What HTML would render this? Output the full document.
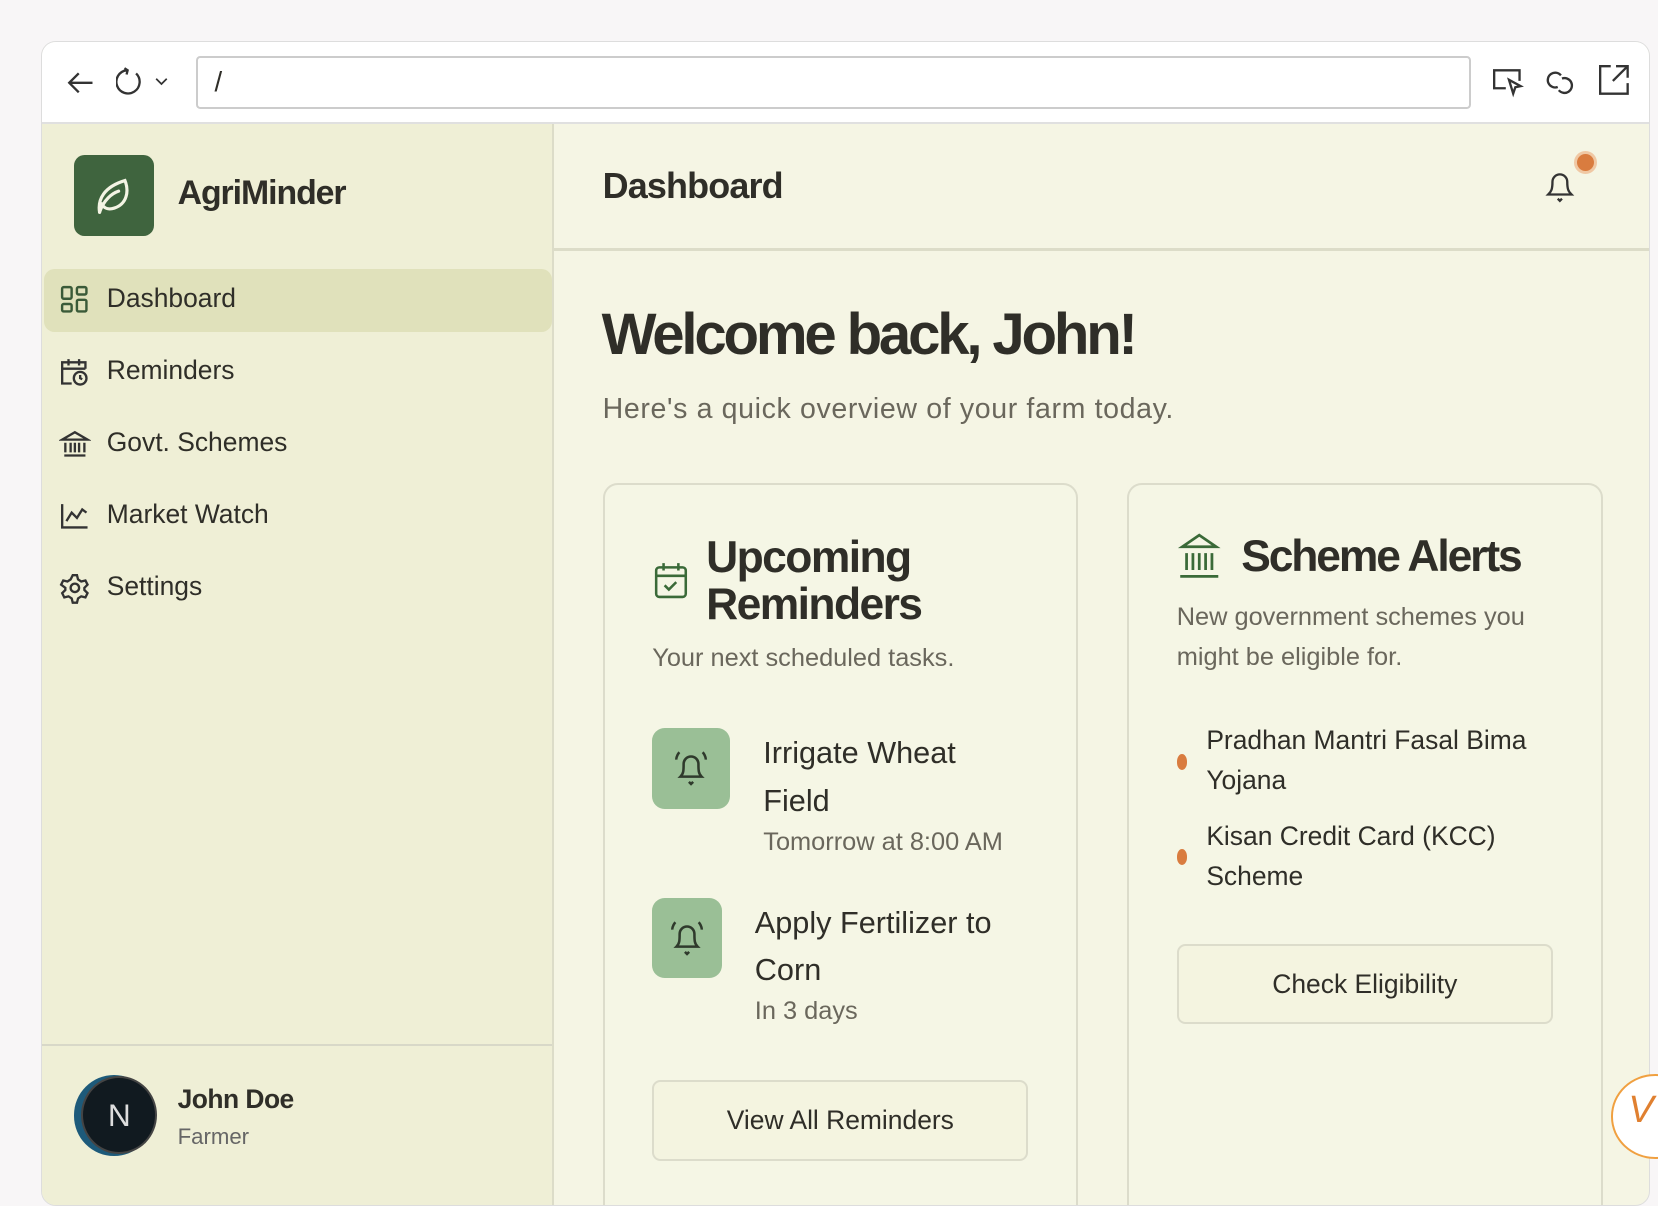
<!DOCTYPE html>
<html><head><meta charset="utf-8"><style>
html{zoom:1.0574}
body{margin:0;width:1568px;height:1120px;background:#f8f6f7;font-family:"Liberation Sans Narrow","Liberation Sans",sans-serif;font-stretch:condensed;color:#2f2e28;position:relative;overflow:hidden}
.a{position:absolute;white-space:nowrap}
.frame{position:absolute;left:39px;top:39px;width:1520px;height:1100px;border:1px solid #ddd;border-radius:14px;background:#f5f5e4;overflow:hidden}
.tb{position:absolute;left:0;top:0;width:1520px;height:75px;background:#fff;border-bottom:2px solid #e0e0e0}
.side{position:absolute;left:0;top:77px;width:482px;height:1030px;background:#efefd6;border-right:2px solid #dcdcc8}
.card{position:absolute;background:#f5f6e5;border:2px solid #dcdccb;border-radius:14px}
.btn{position:absolute;border:2px solid #dcdccb;border-radius:8px;background:#f4f4e0;text-align:center;font-size:25px}
.bell{position:absolute;width:74px;height:76px;background:#9abf96;border-radius:12px}
svg{position:absolute}
</style></head><body>
<div class="frame">
 <div class="tb">
  <svg style="left:22px;top:24px" width="30" height="28" viewBox="0 0 30 28" fill="none" stroke="#333" stroke-width="2.2"><path d="M26 14H4M13 5L4 14l9 9"/></svg>
  <svg style="left:70px;top:22px" width="50" height="32" viewBox="0 0 50 32" fill="none" stroke="#333" stroke-width="2.2"><path d="M10 5A11 11 0 1 0 19 8M8 3l3 2-1 4"/><path d="M38 13l5 5 5-5" stroke-width="1.6"/></svg>
  <div style="position:absolute;left:145px;top:13px;width:1186px;height:46px;border:2px solid #ccc;border-radius:4px;font-size:26px;line-height:46px;padding-left:16px;font-family:'Liberation Sans',sans-serif">/</div>
  <svg style="left:1370px;top:22px" width="32" height="32" viewBox="0 0 32 32" fill="none" stroke="#333" stroke-width="2.2"><path d="M14 22H3V5h24v10"/><path d="M17 14l11 6-5 1-2 6z"/></svg>
  <svg style="left:1420px;top:24px" width="32" height="28" viewBox="0 0 32 28" fill="none" stroke="#333" stroke-width="2.2"><path d="M13 18a7 7 0 1 1 3-11M17 10a7 7 0 1 1-3 11"/></svg>
  <svg style="left:1470px;top:20px" width="32" height="32" viewBox="0 0 32 32" fill="none" stroke="#333" stroke-width="2.2"><path d="M13 3H3v26h26V19M18 3h11v11M29 3L15 17"/></svg>
 </div>
 <div class="side">
  <div style="position:absolute;left:30px;top:30px;width:76px;height:76px;background:#3f643e;border-radius:10px"></div>
  <svg style="left:44px;top:44px" width="48" height="48" viewBox="0 0 48 48" fill="none" stroke="#f4f4e4" stroke-width="3" stroke-linecap="round"><path d="M10 40C8 28 14 16 34 10c4 10 2 22-10 26-6 2-10 0-12-4"/><path d="M10 40c4-12 12-18 18-20"/></svg>
  <div class="a" style="left:128px;top:48px;font-size:32px;font-weight:bold;letter-spacing:-1px">AgriMinder</div>
  <div style="position:absolute;left:2px;top:137px;width:480px;height:60px;background:#e0e1bb;border-radius:10px"></div>
  <svg style="left:17px;top:153px" width="28" height="28" viewBox="0 0 28 28" fill="none" stroke="#3a5a38" stroke-width="2.3"><rect x="2" y="2" width="9" height="11" rx="1.5"/><rect x="16" y="2" width="9" height="7" rx="1.5"/><rect x="2" y="18" width="9" height="7" rx="1.5"/><rect x="16" y="14" width="9" height="11" rx="1.5"/></svg>
  <div class="a" style="left:61px;top:151px;font-size:25px">Dashboard</div>
  <svg style="left:16px;top:220px" width="30" height="30" viewBox="0 0 30 30" fill="none" stroke="#333" stroke-width="2.2"><path d="M12 26H3V6h22v6M3 12h22M9 3v6M19 3v6"/><circle cx="20" cy="21" r="6"/><path d="M20 18v3l2 1"/></svg>
  <div class="a" style="left:61px;top:219px;font-size:25px">Reminders</div>
  <svg style="left:16px;top:288px" width="30" height="30" viewBox="0 0 30 30" fill="none" stroke="#333" stroke-width="2.2"><path d="M3 11h24L15 4zM5 26h20M6 14v9M11 14v9M15 14v9M19 14v9M24 14v9"/></svg>
  <div class="a" style="left:61px;top:287px;font-size:25px">Govt. Schemes</div>
  <svg style="left:16px;top:357px" width="30" height="28" viewBox="0 0 30 28" fill="none" stroke="#333" stroke-width="2.2"><path d="M3 3v22h24M7 19l5-8 5 5 5-8 4 3"/></svg>
  <div class="a" style="left:61px;top:355px;font-size:25px">Market Watch</div>
  <svg style="left:16px;top:424px" width="30" height="30" viewBox="0 0 30 30" fill="none" stroke="#333" stroke-width="2.2"><path d="M13 3h4l1 4 3 2 4-1 2 4-3 3v2l3 3-2 4-4-1-3 2-1 4h-4l-1-4-3-2-4 1-2-4 3-3v-2L2 12l2-4 4 1 3-2z"/><circle cx="15" cy="15" r="4"/></svg>
  <div class="a" style="left:61px;top:423px;font-size:25px">Settings</div>
  <div style="position:absolute;left:0;top:870px;width:482px;height:2px;background:#d8d8c8"></div>
  <div style="position:absolute;left:30px;top:900px;width:76px;height:76px;border-radius:50%;background:#1d5a7a"></div>
  <div style="position:absolute;left:37px;top:901px;width:68px;height:70px;border-radius:50%;background:#111a20;border:2px solid #444;color:#ddd;font-size:30px;text-align:center;line-height:70px;font-family:'Liberation Sans',sans-serif">N</div>
  <div class="a" style="left:128px;top:908px;font-size:25px;font-weight:bold;letter-spacing:-0.5px">John Doe</div>
  <div class="a" style="left:128px;top:946px;font-size:21px;color:#666">Farmer</div>
 </div>
 <div style="position:absolute;left:484px;top:195px;width:1036px;height:2px;background:#dcdcc8"></div>
 <div class="a" style="left:530px;top:116px;font-size:34px;font-weight:bold;letter-spacing:-0.8px">Dashboard</div>
 <svg style="left:1420px;top:118px" width="30" height="34" viewBox="0 0 30 34" fill="none" stroke="#333" stroke-width="2.2"><path d="M4 26h22c-3-3-4-5-4-12a7 7 0 0 0-14 0c0 7-1 9-4 12zM13 30l2 2 2-2"/></svg>
 <div style="position:absolute;left:1449px;top:103px;width:16px;height:16px;border-radius:50%;background:#d97c3f;border:3px solid #f0c8a4"></div>
 <div class="a" style="left:529px;top:245px;font-size:55px;font-weight:bold;letter-spacing:-3px">Welcome back, John!</div>
 <div class="a" style="left:530px;top:332px;font-size:27px;color:#6a675c;letter-spacing:0.6px">Here's a quick overview of your farm today.</div>
 <div class="card" style="left:530px;top:417px;width:446px;height:700px">
  <svg style="left:46px;top:72px" width="34" height="38" viewBox="0 0 34 38" fill="none" stroke="#3a6a38" stroke-width="2.4"><rect x="3" y="6" width="28" height="28" rx="3"/><path d="M3 14h28M10 2v7M24 2v7M11 23l4 4 7-7"/></svg>
  <div class="a" style="left:96px;top:46px;font-size:42px;font-weight:bold;line-height:45px;letter-spacing:-1.5px">Upcoming<br>Reminders</div>
  <div class="a" style="left:45px;top:150px;font-size:24px;color:#6a675c">Your next scheduled tasks.</div>
  <div class="bell" style="left:45px;top:230px"></div>
  <svg style="left:64px;top:248px" width="36" height="40" viewBox="0 0 36 40" fill="none" stroke="#2f3a2c" stroke-width="2.4"><path d="M8 28h20c-3-3-3-6-3-12a7 7 0 0 0-14 0c0 6 0 9-3 12zM16 33l2 2 2-2M4 12c0-3 2-6 3-7M32 12c0-3-2-6-3-7"/></svg>
  <div class="a" style="left:150px;top:232px;font-size:29px;line-height:45px">Irrigate Wheat<br>Field</div>
  <div class="a" style="left:150px;top:324px;font-size:24px;color:#6a675c">Tomorrow at 8:00 AM</div>
  <div class="bell" style="left:45px;top:390px;width:66px"></div>
  <svg style="left:60px;top:408px" width="36" height="40" viewBox="0 0 36 40" fill="none" stroke="#2f3a2c" stroke-width="2.4"><path d="M8 28h20c-3-3-3-6-3-12a7 7 0 0 0-14 0c0 6 0 9-3 12zM16 33l2 2 2-2M4 12c0-3 2-6 3-7M32 12c0-3-2-6-3-7"/></svg>
  <div class="a" style="left:142px;top:392px;font-size:29px;line-height:45px">Apply Fertilizer to<br>Corn</div>
  <div class="a" style="left:142px;top:484px;font-size:24px;color:#6a675c">In 3 days</div>
  <div class="btn" style="left:45px;top:563px;width:352px;height:72px;line-height:72px">View All Reminders</div>
 </div>
 <div class="card" style="left:1026px;top:417px;width:446px;height:700px">
  <svg style="left:44px;top:44px" width="44" height="46" viewBox="0 0 44 46" fill="none" stroke="#3a6a38" stroke-width="2.6"><path d="M6 14h32L22 3zM4 42h36M10 20v16M16 20v16M22 20v16M28 20v16M34 20v16"/></svg>
  <div class="a" style="left:106px;top:44px;font-size:42px;font-weight:bold;letter-spacing:-2px">Scheme Alerts</div>
  <div class="a" style="left:45px;top:106px;font-size:24px;line-height:38px;color:#6a675c">New government schemes you<br>might be eligible for.</div>
  <div style="position:absolute;left:45px;top:254px;width:10px;height:15px;border-radius:50%;background:#d97c3f"></div>
  <div class="a" style="left:73px;top:222px;font-size:25px;line-height:38px">Pradhan Mantri Fasal Bima<br>Yojana</div>
  <div style="position:absolute;left:45px;top:344px;width:10px;height:15px;border-radius:50%;background:#d97c3f"></div>
  <div class="a" style="left:73px;top:313px;font-size:25px;line-height:38px">Kisan Credit Card (KCC)<br>Scheme</div>
  <div class="btn" style="left:45px;top:434px;width:352px;height:72px;line-height:72px">Check Eligibility</div>
 </div>
</div>
<div style="position:absolute;left:1524px;top:1016px;width:80px;height:76px;border-radius:50%;border:2px solid #f0a040;background:#fff"></div>
<div class="a" style="left:1540px;top:1030px;font-size:36px;font-style:italic;color:#e08030">V</div>
</body></html>
